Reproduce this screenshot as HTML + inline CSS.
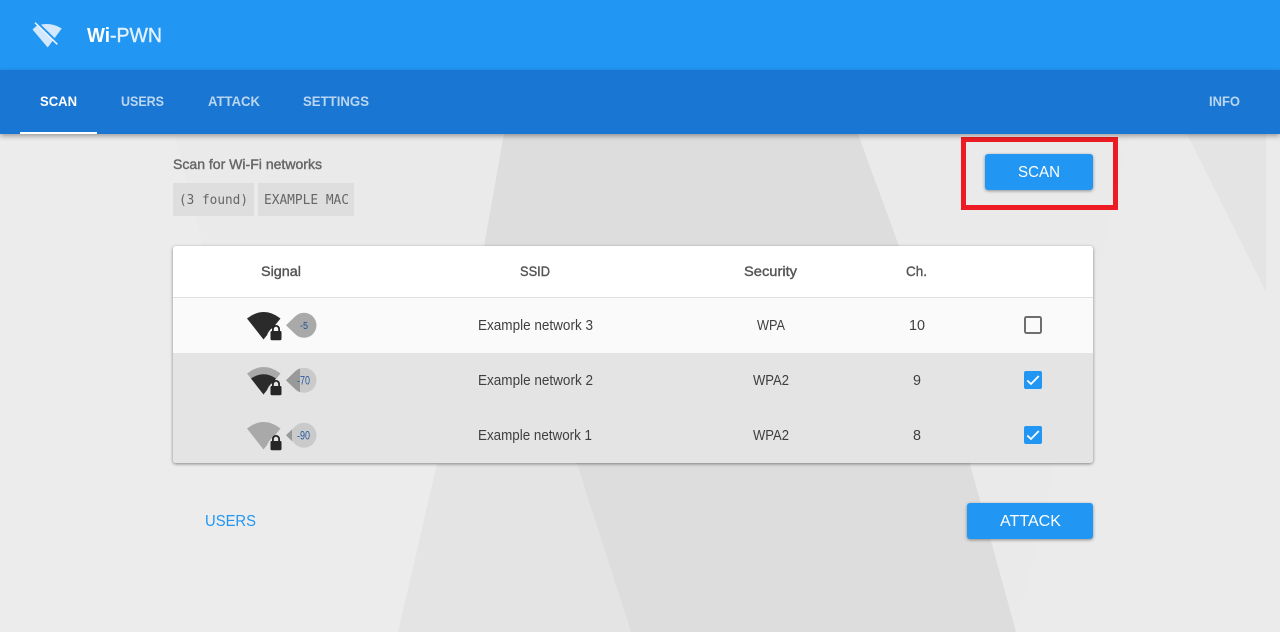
<!DOCTYPE html>
<html><head><meta charset="utf-8"><title>Wi-PWN</title>
<style>
html,body{margin:0;padding:0;width:1280px;height:632px;overflow:hidden;background:#ececec}
.b{position:absolute}
text{font-family:"Liberation Sans",sans-serif}
.m{stroke-width:.4}
.mono{font-family:"DejaVu Sans Mono",monospace}
</style></head><body>
<svg class="b" style="left:0;top:0;z-index:0" width="1280" height="632" viewBox="0 0 1280 632">
<rect width="1280" height="632" fill="#ececec"/>
<polygon points="175,134 1130,134 1016,632 398,632 437,464 203,246" fill="#eaeaea"/>
<polygon points="1130,134 1280,134 1280,632 1016,632" fill="#ebebeb"/>
<polygon points="1187,134 1266,134 1266,292" fill="#e4e4e4"/>
<polygon points="437,464 577,464 631,632 398,632" fill="#e4e4e4"/>
<polygon points="504,134 858,134 899,246 970,464 1016,632 631,632 577,464 484,246" fill="#dddddd"/>
</svg>
<div class="b" style="left:0;top:0;width:1280px;height:70px;background:#2196f3;z-index:2"></div>
<div class="b" style="left:0;top:70px;width:1280px;height:64px;background:#1976d2;box-shadow:0 2px 5px rgba(0,0,0,.35);z-index:2"></div>
<div class="b" style="left:20px;top:132px;width:77px;height:2px;background:#fff;z-index:3"></div>
<div class="b" style="left:173px;top:183px;width:81px;height:33px;background:#dedede;z-index:1"></div>
<div class="b" style="left:258px;top:183px;width:96px;height:33px;background:#dedede;z-index:1"></div>
<div class="b" style="left:985px;top:154px;width:108px;height:36px;background:#2196f3;border-radius:3px;box-shadow:0 1px 3px rgba(0,0,0,.4);z-index:1"></div>
<div class="b" style="left:967px;top:503px;width:126px;height:36px;background:#2196f3;border-radius:3px;box-shadow:0 1px 3px rgba(0,0,0,.4);z-index:1"></div>
<div class="b" style="left:961px;top:137px;width:147px;height:63px;border:5px solid #ed1c24;z-index:1"></div>
<div class="b" style="left:173px;top:246px;width:920px;height:217px;background:#fff;border-radius:3px;box-shadow:0 1px 3px rgba(0,0,0,.45);overflow:hidden;z-index:1">
  <div class="b" style="left:0;top:51px;width:920px;height:1px;background:#e0e0e0"></div>
  <div class="b" style="left:0;top:52px;width:920px;height:55px;background:#fafafa"></div>
  <div class="b" style="left:0;top:107px;width:920px;height:110px;background:#e4e4e4"></div>
</div>
<svg class="b" style="left:0;top:0;z-index:4" width="1280" height="632" viewBox="0 0 1280 632">
<defs>
<clipPath id="c2"><rect x="280" y="360" width="20" height="40"/></clipPath>
<clipPath id="c3"><rect x="280" y="415" width="12" height="40"/></clipPath>
<g id="lock"><rect x="270.5" y="331" width="11" height="9.2" rx="1.2" fill="#262626"/><path d="M272.9 332V329a3.1 3.1 0 0 1 6.2 0V332" fill="none" stroke="#262626" stroke-width="1.8"/></g>
</defs>

<!-- logo -->
<path d="M43 24.2Q53 23 61.7 28.5L47.7 47.5L32.5 29.5L37 25.5Z" fill="#d3e8fc"/>
<line x1="36" y1="22" x2="58" y2="43.5" stroke="#2196f3" stroke-width="3"/>
<line x1="35" y1="22.7" x2="57.3" y2="44.3" stroke="#eaf4fe" stroke-width="1.6"/>
<text x="87" y="42" font-size="20" font-weight="bold" fill="#fff" textLength="23" lengthAdjust="spacingAndGlyphs">Wi</text>
<text class="m" x="110" y="42" font-size="20" fill="#e3f1fd" stroke="#e3f1fd" textLength="52" lengthAdjust="spacingAndGlyphs">-PWN</text>

<!-- nav -->
<g font-size="14" font-weight="bold">
<text x="40" y="106" fill="#fff" textLength="37" lengthAdjust="spacingAndGlyphs">SCAN</text>
<text x="121" y="106" fill="#bad6f2" textLength="43" lengthAdjust="spacingAndGlyphs">USERS</text>
<text x="208" y="106" fill="#bad6f2" textLength="52" lengthAdjust="spacingAndGlyphs">ATTACK</text>
<text x="303" y="106" fill="#bad6f2" textLength="66" lengthAdjust="spacingAndGlyphs">SETTINGS</text>
<text x="1209" y="106" fill="#bad6f2" textLength="31" lengthAdjust="spacingAndGlyphs">INFO</text>
</g>

<text class="m" x="173" y="169" font-size="14" fill="#666" stroke="#666" textLength="149" lengthAdjust="spacingAndGlyphs">Scan for Wi-Fi networks</text>
<g font-size="13" fill="#666">
<text class="mono" x="179" y="204" textLength="69" lengthAdjust="spacingAndGlyphs">(3 found)</text>
<text class="mono" x="264" y="204" textLength="85" lengthAdjust="spacingAndGlyphs">EXAMPLE MAC</text>
</g>

<text x="1018" y="177" font-size="16" fill="#fff" textLength="42" lengthAdjust="spacingAndGlyphs">SCAN</text>
<text x="1000" y="526" font-size="16" fill="#fff" textLength="61" lengthAdjust="spacingAndGlyphs">ATTACK</text>
<text x="205" y="526" font-size="16" fill="#2196f3" textLength="51" lengthAdjust="spacingAndGlyphs">USERS</text>

<!-- table header -->
<g font-size="14" fill="#555" stroke="#555">
<text class="m" x="261" y="276" textLength="40" lengthAdjust="spacingAndGlyphs">Signal</text>
<text class="m" x="520" y="276" textLength="30" lengthAdjust="spacingAndGlyphs">SSID</text>
<text class="m" x="744" y="276" textLength="53" lengthAdjust="spacingAndGlyphs">Security</text>
<text class="m" x="906" y="276" textLength="21" lengthAdjust="spacingAndGlyphs">Ch.</text>
</g>

<!-- rows text -->
<g font-size="14.5" fill="#3f3f3f">
<text x="478" y="330" textLength="115" lengthAdjust="spacingAndGlyphs">Example network 3</text>
<text x="757" y="330" textLength="28" lengthAdjust="spacingAndGlyphs">WPA</text>
<text x="909" y="330" textLength="16" lengthAdjust="spacingAndGlyphs">10</text>
<text x="478" y="385" textLength="115" lengthAdjust="spacingAndGlyphs">Example network 2</text>
<text x="753" y="385" textLength="36" lengthAdjust="spacingAndGlyphs">WPA2</text>
<text x="913" y="385" textLength="8" lengthAdjust="spacingAndGlyphs">9</text>
<text x="478" y="440" textLength="114" lengthAdjust="spacingAndGlyphs">Example network 1</text>
<text x="753" y="440" textLength="36" lengthAdjust="spacingAndGlyphs">WPA2</text>
<text x="913" y="440" textLength="8" lengthAdjust="spacingAndGlyphs">8</text>
</g>

<!-- row 1 signal -->
<path d="M247 318.5Q264 305.5 280.5 318.5L263.5 339.5Z" fill="#2b2b2b"/>
<circle cx="280" cy="339" r="13.5" fill="#fafafa"/>
<use href="#lock"/>
<path d="M286 325.3L295.3 316.3A12.5 12.5 0 1 1 295.3 334.3Z" fill="#a9a9a9"/>
<text x="300" y="329" font-size="10" fill="#24508c" textLength="8" lengthAdjust="spacingAndGlyphs">-5</text>

<!-- row 2 signal -->
<path d="M247 373.5Q264 360.5 280.5 373.5L263.5 394.5Z" fill="#a9a9a9"/>
<path d="M251 378.5Q264 370 276 378.5L263.5 394.5Z" fill="#2b2b2b"/>
<circle cx="280" cy="394" r="13.5" fill="#e4e4e4"/>
<g transform="translate(0,55)"><use href="#lock"/></g>
<path d="M286 380.3L295.3 371.3A12.5 12.5 0 1 1 295.3 389.3Z" fill="#cacaca"/>
<path d="M286 380.3L295.3 371.3A12.5 12.5 0 1 1 295.3 389.3Z" fill="#999" clip-path="url(#c2)"/>
<text x="297" y="384.5" font-size="11.5" fill="#2b5c9f" textLength="13" lengthAdjust="spacingAndGlyphs">-70</text>

<!-- row 3 signal -->
<path d="M247 428.5Q264 415.5 280.5 428.5L263.5 449.5Z" fill="#a9a9a9"/>
<circle cx="280" cy="449" r="13.5" fill="#e4e4e4"/>
<g transform="translate(0,110)"><use href="#lock"/></g>
<path d="M286 435.3L295.3 426.3A12.5 12.5 0 1 1 295.3 444.3Z" fill="#cacaca"/>
<path d="M286 435.3L295.3 426.3A12.5 12.5 0 1 1 295.3 444.3Z" fill="#999" clip-path="url(#c3)"/>
<text x="297" y="439.5" font-size="11.5" fill="#2b5c9f" textLength="13" lengthAdjust="spacingAndGlyphs">-90</text>

<!-- checkboxes -->
<rect x="1025" y="317" width="16" height="16" rx="1.5" fill="none" stroke="#6e6e6e" stroke-width="2"/>
<rect x="1024" y="371" width="18" height="18" rx="2" fill="#2196f3"/>
<path d="M1027.3 380.5L1031 384L1038.8 376" fill="none" stroke="#fff" stroke-width="1.8"/>
<rect x="1024" y="426" width="18" height="18" rx="2" fill="#2196f3"/>
<path d="M1027.3 435.5L1031 439L1038.8 431" fill="none" stroke="#fff" stroke-width="1.8"/>
</svg>
</body></html>
